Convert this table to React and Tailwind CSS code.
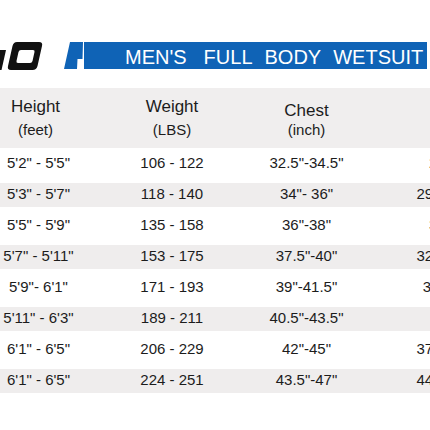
import React from 'react';

const ROWS = [
  ["5'2\" - 5'5\"", '106 - 122', '32.5"-34.5"', '28"-30"'],
  ["5'3\" - 5'7\"", '118 - 140', '34"- 36"', '29.5"-31.5"'],
  ["5'5\" - 5'9\"", '135 - 158', '36"-38"', '30"-32"'],
  ["5'7\" - 5'11\"", '153 - 175', '37.5"-40"', '32.5"-34.5"'],
  ["5'9\"- 6'1\"", '171 - 193', '39"-41.5"', '33"-35.5"'],
  ["5'11\" - 6'3\"", '189 - 211', '40.5"-43.5"', '35-37'],
  ["6'1\" - 6'5\"", '206 - 229', '42"-45"', '37.5"-40.5"'],
  ["6'1\" - 6'5\"", '224 - 251', '43.5"-47"', '44.5"-47.5"'],
];

const GRID = 'grid grid-cols-[133px_134px_135px_159px] ml-[-28px] w-[561px]';

function Logo() {
  return (
    <svg width="44" height="28" viewBox="0 0 44 28">
      <polygon points="0,8 6,8 1.5,28 0,28" fill="#111" />
      <path
        fillRule="evenodd"
        fill="#111"
        d="M17 0 H39 Q43 0 42 4 L37.5 24 Q36.5 28 32.5 28 H11 Q7 28 8 24 L12.5 4 Q13.5 0 17 0 Z M21 8 H33 Q35 8 34.5 10 L32.5 19 Q32 21 30 21 H18 Q16 21 16.5 19 L18.5 10 Q19 8 21 8 Z"
      />
    </svg>
  );
}

export default function App() {
  return (
    <div className="w-[430px] h-[430px] bg-white overflow-hidden font-['Liberation_Sans',Arial,sans-serif] text-[#1c1c1c]">
      {/* title banner */}
      <div className="flex h-[27px] mt-[42px]">
        <Logo />
        <div className="w-[20px]" />
        <svg width="20" height="27" viewBox="0 0 20 27">
          <polygon points="6,0 19,0 18.5,17 13.5,17 13,27 0,27" fill="#0f63b6" />
        </svg>
        <div className="w-[343px] bg-[#0f63b6] text-white text-[20px] leading-[24px] pt-[3px] flex">
          <span className="ml-[41px]">MEN'S</span>
          <span className="ml-[17px]">FULL</span>
          <span className="ml-[12px]">BODY</span>
          <span className="ml-[12px]">WETSUIT</span>
        </div>
      </div>

      {/* column headers */}
      <div className="mt-[19px] h-[60px] bg-[#f0eeee] overflow-hidden">
        <div className={GRID}>
          <div className="flex flex-col items-center pt-[7px] pr-[6px]">
            <span className="text-[17px] leading-[24px]">Height</span>
            <span className="text-[15px] leading-[22px]">(feet)</span>
          </div>
          <div className="flex flex-col items-center pt-[7px]">
            <span className="text-[17px] leading-[24px]">Weight</span>
            <span className="text-[15px] leading-[22px]">(LBS)</span>
          </div>
          <div className="flex flex-col items-center pt-[12px]">
            <span className="text-[17px] leading-[21px]">Chest</span>
            <span className="text-[15px] leading-[18px]">(inch)</span>
          </div>
          <div />
        </div>
      </div>

      {/* size rows */}
      <div className="overflow-hidden">
        {ROWS.map((r, i) => (
          <div key={i} className="h-[31px] flex items-center">
            <div className={`${GRID} h-[24px] items-center text-[15px] ${i % 2 ? 'bg-[#efeded]' : ''}`}>
              {r.map((c, j) => (
                <span key={j} className="text-center whitespace-nowrap">{c}</span>
              ))}
            </div>
          </div>
        ))}
      </div>
    </div>
  );
}
